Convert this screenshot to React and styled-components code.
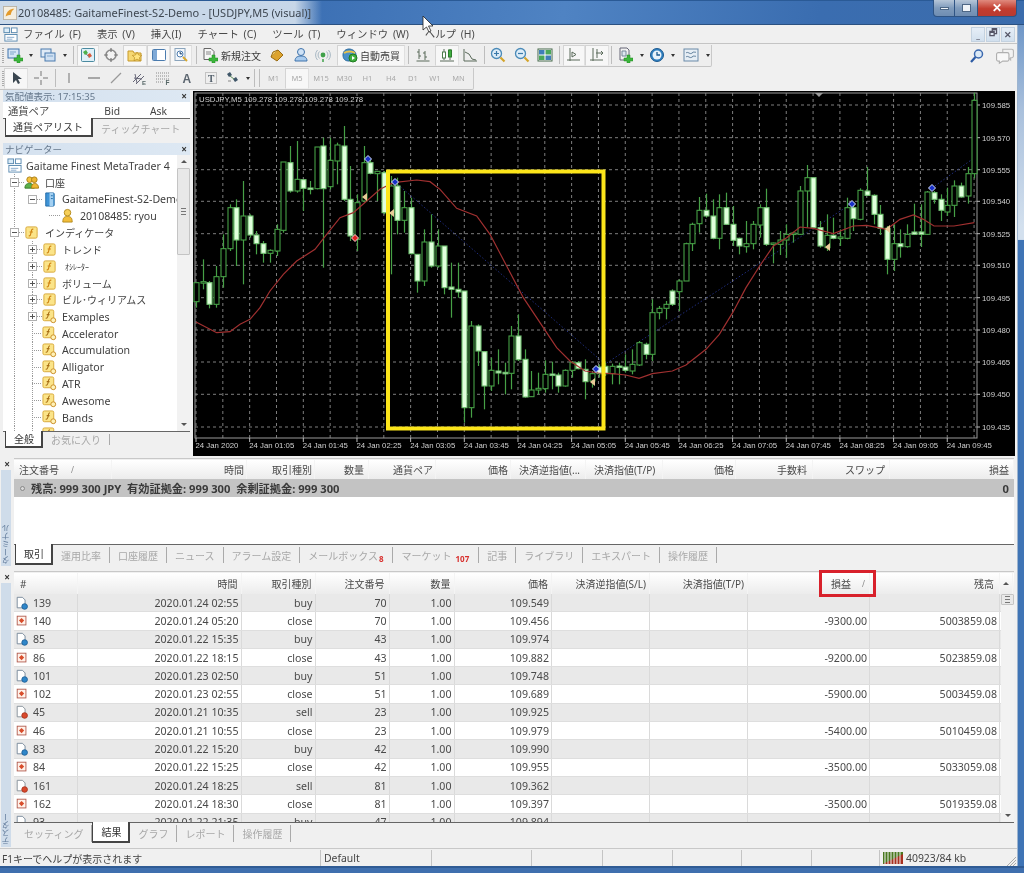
import React from 'react';
import styled, { createGlobalStyle, css } from 'styled-components';

const Global = createGlobalStyle`
  html, body { margin: 0; padding: 0; background: #f0f0f0; }
  * { box-sizing: border-box; }
`;

const FONT = `"Noto Sans", "Noto Sans CJK JP", sans-serif`;

const Root = styled.div`
  position: relative; width: 1024px; height: 873px; overflow: hidden;
  display: flex; flex-direction: column;
  font-family: ${FONT}; font-size: 10px; color: #3c3c3c; background: #f0f0f0;
  filter: blur(0.3px);
`;
const TitleBar = styled.div`
  height: 25px; flex: none; display: flex; align-items: flex-start; justify-content: space-between;
  border-top: 1px solid #2a5a96; border-bottom: 1px solid #2b5181;
  background:
    linear-gradient(90deg, rgba(214,226,238,.92) 0, rgba(214,226,238,.9) 295px, rgba(214,226,238,0) 322px),
    linear-gradient(100deg, #3c70b4 30%, #4f83c3 55%, #3a6db0 80%, #3b6cac 100%);
`;
const TitleLeft = styled.div`display: flex; align-items: center; height: 23px; padding-left: 3px; gap: 1px;`;
const TitleText = styled.span`font-size: 11px; color: #3d4650; white-space: nowrap;`;
const WinBtns = styled.div`display: flex; margin-right: 7px; margin-top: -1px;`;
const WinBtn = styled.div`
  width: ${p => p.$w}px; height: 17px; display: flex; align-items: center; justify-content: center;
  border: 1px solid #2f5484; border-top: none; border-left-width: ${p => p.$first ? 1 : 0}px;
  border-radius: ${p => p.$first ? '0 0 0 4px' : p.$close ? '0 0 4px 0' : '0'};
  background: ${p => p.$close ? 'linear-gradient(180deg,#e08a7e,#c33c2e 55%,#b93a30)' : 'linear-gradient(180deg,#b6c6d8,#7f9bbc 50%,#6f8db2)'};
  color: #fff; font-weight: 700; font-size: 12px; line-height: 1;
`;
const WinGlyph = styled.span`
  display: block; background: #eef3f8; border: 1px solid #4d6786;
  width: ${p => p.$w}px; height: ${p => p.$h}px;
`;
const Body = styled.div`flex: 1; min-height: 0; display: flex;`;
const Win = styled.div`width: 1017px; flex: none; display: flex; flex-direction: column; background: #f0f0f0;`;
const RightFrame = styled.div`
  flex: 1; background: linear-gradient(180deg, #6f97c8 0, #a9c0dc 10%, #d3e0ee 24%, #d3e0ee 25.5%, #3f74b5 25.6%, #3f74b5 100%);
  border-left: 1px solid #9db4cf;
`;
const BottomFrame = styled.div`height: 7px; flex: none; background: #3f6fae; border-top: 2px solid #2f5b94;`;

const MenuBar = styled.div`
  height: 19px; flex: none; display: flex; align-items: center; padding-left: 3px;
  border-bottom: 1px solid #c4c4c4;
`;
const MenuItems = styled.div`display: flex; gap: 16px; margin-left: 5px; margin-top: -2px; font-size: 10.4px; word-spacing: 2px; color: #4a4a4a;`;
const MdiBtns = styled.div`display: flex; gap: 1px; margin-left: auto; margin-right: 2px; align-items: center;`;
const MdiBtn = styled.div`
  width: 14px; height: 15px; display: flex; align-items: center; justify-content: center;
  background: linear-gradient(180deg, #e6eef7, #d2e0ee); border: 1px solid #c4d2e0;
  font-size: 9px; font-weight: 700; color: #556;
`;
const ToolRow = styled.div`
  height: 23px; flex: none; display: flex; align-items: center; position: relative;
`;
const ToolGroup = styled.div`
  height: 22px; display: flex; align-items: center; padding-left: 4px; flex: none;
  width: ${p => p.$w}px; background: #eeeeee;
  border-right: 1px solid #c9c9c9; border-bottom: 1px solid #c4c4c4; border-radius: 0 0 2px 0;
  background-image: repeating-linear-gradient(180deg, #aaa 0 1px, transparent 1px 2px);
  background-size: 2px 16px; background-position: 2px 3px; background-repeat: no-repeat;
`;
const Tool = styled.div`
  width: ${p => p.$w}px; height: 21px; flex: none; display: flex; align-items: center; justify-content: center;
  gap: 2px; color: #3b3b3b; font-size: 10px; white-space: nowrap;
  ${p => p.$box && css`background: #f7f7f7; border: 1px solid #d4d4d4; border-bottom-color: #eee; border-right-color: #e0e0e0;`}
`;
const Period = styled(Tool)`font-size: 7.5px; color: #a9a9a9;`;
const Sep = styled.div`
  width: ${p => p.$w}px; height: 18px; flex: none; display: flex; justify-content: center;
  &::before { content: ''; width: 1px; height: 100%; background: #bdbdbd; }
`;
const Caret = styled.div`
  width: 0; height: 0; border: 2.5px solid transparent; border-top: 3px solid #333; margin-top: 3px;
`;
const RightTools = styled.div`margin-left: auto; display: flex; gap: 11px; align-items: center; margin-right: 3px;`;

const Workspace = styled.div`height: 367px; flex: none; display: flex;`;
const LeftCol = styled.div`width: 193px; flex: none; padding: 0 3px 6px 3px; display: flex; flex-direction: column;`;
const PanelTitle = styled.div`
  height: 12px; flex: none; display: flex; align-items: center; justify-content: space-between;
  padding: 0 3px 0 2px; font-size: 9.5px; color: #66788c; white-space: nowrap;
  background: linear-gradient(90deg, #d4e1ef, #dde8f3);
`;
const CloseX = styled.span`font-size: 10px; font-weight: 700; color: #333; line-height: 1;`;
const WatchHead = styled.div`
  height: 16px; flex: none; background: #fff; display: grid; grid-template-columns: 70px 47px 47px 1fr;
  align-items: end; overflow: hidden; font-size: 10.3px; color: #444; line-height: 13px;
`;
const WatchCell = styled.span`text-align: ${p => p.$right ? 'right' : 'left'}; padding-left: ${p => p.$right ? 0 : 5}px;`;
const PanelGap = styled.div`flex: none; height: 6px;`;
const TabsRow = styled.div`
  flex: none; height: ${p => p.$h}px; display: flex; align-items: flex-start; padding-left: ${p => p.$pad}px;
  border-top: 1px solid #666; background: #f0f0f0; font-size: 10px; white-space: nowrap;
`;
const Tab = styled.div`
  height: ${p => p.$active ? p.$h + 1 : p.$h - 4}px; flex: none; display: flex; align-items: center;
  padding: 0 ${p => p.$pr ?? 8}px 0 ${p => p.$pl ?? 8}px; color: ${p => p.$active ? '#333' : '#a8a8a8'};
  ${p => p.$active
    ? css`background: #fff; margin-top: -1px; border: 1px solid #444; border-top-color: #fff; border-width: 0 2px 2px 1px;`
    : css`margin-top: 2px; ${p.$plain ? '' : 'border-right: 1px solid #aaa;'}`}
`;
const Badge = styled.b`color: #d8302e; font-size: 8px; align-self: flex-end; margin-left: ${p => p.$ml ?? 1}px; line-height: 9px;`;

const TreeWrap = styled.div`flex: 1; min-height: 0; display: flex; background: #fff;`;
const Tree = styled.div`flex: 1; min-width: 0; overflow: hidden; padding-top: 2.2px; white-space: nowrap; font-size: 10.6px;`;
const dotted = x => `repeating-linear-gradient(180deg,#9a9a9a 0 1px,transparent 1px 2px) ${x}px 0 / 1px 100% no-repeat`;
const Row = styled.div`
  height: 16.8px; display: flex; align-items: center; color: #3f3f3f;
  background: ${p => (p.$g || []).map(dotted).join(',') || 'none'};
  padding-left: ${p => p.$pad}px;
`;
const Exp = styled.span`
  width: 9px; height: 9px; flex: none; border: 1px solid #b0b0b0; background: #fff; position: relative;
  &::before { content: ''; position: absolute; left: 1px; right: 1px; top: 3px; height: 1px; background: #555; }
  ${p => p.$plus && css`&::after { content: ''; position: absolute; top: 1px; bottom: 1px; left: 3px; width: 1px; background: #555; }`}
`;
const Conn = styled.span`
  width: ${p => p.$w}px; height: 1px; flex: none;
  background: repeating-linear-gradient(90deg,#9a9a9a 0 1px,transparent 1px 2px);
`;
const RowLabel = styled.span`
  margin-left: ${p => p.$ml ?? 5}px;
  ${p => p.$cjk && css`font-size: 10px;`}
  ${p => p.$tiny && css`font-size: 8px; margin-left: 8px;`}
`;
const Scroll = styled.div`
  width: ${p => p.$w}px; flex: none; display: flex; flex-direction: column; align-items: center;
  background: #f2f2f2; color: #555; font-size: 7px;
`;
const Arrow = styled.div`
  width: 0; height: 0; flex: none; margin: 5px 0; border: 3px solid transparent;
  ${p => p.$up ? 'border-bottom: 3px solid #555; border-top: none;' : 'border-top: 3px solid #555; border-bottom: none;'}
`;
const Thumb = styled.div`
  width: 100%; height: ${p => p.$h}px; flex: none; border: 1px solid #c4c4c4; border-radius: 1px;
  background: #e8e8e8; display: flex; align-items: center; justify-content: center;
  &::before { content: ''; width: 5px; height: 5px; border-top: 1px solid #777; border-bottom: 1px solid #777; background: linear-gradient(#777,#777) 0 1.500px / 100% 1px no-repeat; }
`;
const Grow = styled.div`flex: 1;`;

const ChartBox = styled.svg`display: block; width: 822px; height: 365px; flex: none; margin-top: 1px; background: #000; font-family: "Liberation Sans", sans-serif; white-space: pre;`;

const Dock = styled.div`display: flex; flex: none; height: ${p => p.$h}px; margin-top: ${p => p.$mt}px;`;
const Side = styled.div`width: 14px; flex: none; display: flex; flex-direction: column; align-items: center; padding-top: 1px; gap: 1px;`;
const SideLabel = styled.div`
  flex: 1; width: 10px; margin-right: 2px; background: #cfdcea; color: #5c7696; font-size: 8px;
  writing-mode: vertical-rl; transform: rotate(180deg); line-height: 10px; white-space: nowrap; padding-top: 2px;
`;
const DockMain = styled.div`width: 1000px; flex: none; display: flex; flex-direction: column; border-top: 1px solid #c8c8c8; min-width: 0;`;
const Head = styled.div`
  display: grid; grid-template-columns: ${p => p.$cols}; height: ${p => p.$h}px; flex: none;
  background: linear-gradient(180deg, #fff, #ececec); margin-top: 1px; align-items: center; color: #4a4a4a; font-size: 10px; white-space: nowrap;
`;
const HCell = styled.div`
  position: relative; padding: 0 ${p => p.$pr ?? 5}px 0 ${p => p.$pl ?? 5}px;
  height: 100%; display: flex; align-items: center; justify-content: ${p => p.$right ? 'flex-end' : 'flex-start'};
  border-right: 1px solid #f4f4f4; min-width: 0;
`;
const SortMark = styled.span`color: #888; font-size: 8px; margin-left: ${p => p.$ml}px;`;
const RedBox = styled.div`position: absolute; left: 71px; top: -3px; width: 57px; height: 27px; border: 3px solid #d8212b;`;
const TotalRow = styled.div`
  height: 18px; flex: none; background: #c3c3c3; display: flex; align-items: center; justify-content: space-between;
  padding: 0 5px 0 6px; font-size: 11.2px; font-weight: 700; color: #3a3a3a; white-space: pre;
`;
const TotalLeft = styled.span`display: flex; align-items: center; gap: 6px;`;
const Dot = styled.i`width: 5px; height: 5px; border-radius: 50%; border: 1px solid #888; background: #d8d8d8; display: block;`;
const Blank = styled.div`flex: 1; background: #fff;`;

const TableArea = styled.div`display: flex; flex: none; height: 228px; overflow: hidden;`;
const RowsCol = styled.div`width: 987px; flex: none; overflow: hidden; background: #fff;`;
const DataRow = styled.div`
  display: grid; grid-template-columns: ${p => p.$cols}; height: 18.3px; align-items: center;
  background: ${p => p.$alt ? '#e9e9e9' : '#fff'}; border-bottom: 1px solid #dedede;
  font-size: 10.6px; color: #4a4a4a; white-space: nowrap;
`;
const Cell = styled.div`
  height: 100%; display: flex; align-items: center; gap: 4px;
  justify-content: ${p => p.$left ? 'flex-start' : 'flex-end'};
  padding: 0 ${p => p.$left ? 0 : 2}px 0 ${p => p.$left ? 1 : 0}px;
  border-right: 1px solid #dadada;
`;
const StatusBar = styled.div`
  height: 19px; flex: none; margin-top: 1px; border-top: 1px solid #c8c8c8; display: grid;
  grid-template-columns: 321px 111px 100px 71px 70px 69px 70px 68px 1fr; align-items: center; font-size: 10.4px; color: #444;
`;
const StatusCell = styled.div`
  height: 16px; display: flex; align-items: center; gap: 3px; padding-left: ${p => p.$pl ?? 3}px; white-space: nowrap;
  ${p => p.$sm && 'font-size: 10px;'}
  ${p => !p.$last && 'border-right: 1px solid #c4c4c4;'}
`;
const Grip = styled.svg`margin-left: auto; margin-top: 6px; flex: none;`;
const Cursor = styled.svg`position: absolute; left: 422px; top: 15px;`;
const Ico = styled.svg`display: block; flex: none;`;

const I = ({ s = 16, children, vb = '0 0 16 16' }) => <Ico width={s} height={s} viewBox={vb}>{children}</Ico>;
const Plus = () => <path d="M10 8h3v3h3v3h-3v2h-3v-2H7v-3h3z" fill="#3cb53c" stroke="#1d8a1d" strokeWidth=".5" />;
const icons = {
  add: <><rect x="1" y="2" width="11" height="9" fill="#d6e6f6" stroke="#3f73ab" /><path d="M3 5h6M3 7h4" stroke="#7fa6cc" /><Plus /></>,
  prof: <><rect x="1" y="2" width="10" height="8" fill="#dfeaf6" stroke="#4a7bae" /><rect x="5" y="6" width="10" height="8" fill="#cfe0f2" stroke="#4a7bae" /><path d="M7 9h6" stroke="#7fa6cc" /></>,
  watch: <><rect x="1.5" y="1.5" width="13" height="13" rx="1" fill="#dff0f8" stroke="#4a8aa0" /><path d="M3 5l3-2 2 3-3 2z" fill="#4ab04a" /><path d="M7 8l3-2 2 3-3 2z" fill="#d85a3a" /><path d="M6 7l3 3" stroke="#888" /></>,
  cross: <><circle cx="8" cy="8" r="5" fill="#f3f3f3" stroke="#8a8a8a" strokeWidth="1.6" /><path d="M8 1v4M8 11v4M1 8h4M11 8h4" stroke="#777" strokeWidth="1.2" /></>,
  star: <><path d="M1 4h5l1 2h7v8H1z" fill="#f6d873" stroke="#c79a2c" /><path d="M10 5l1.6 3 3.2.4-2.4 2.2.7 3.2-3.1-1.7-3 1.7.6-3.2-2.3-2.2 3.2-.4z" fill="#ffe480" stroke="#b98b1e" strokeWidth=".7" /></>,
  panel: <><rect x="1.5" y="2.5" width="13" height="11" rx="1" fill="#fff" stroke="#4a7bae" /><rect x="2" y="3" width="4" height="10" fill="#7fa9d6" /></>,
  clock: <><rect x="2" y="1.5" width="10" height="12" fill="#f2f6fa" stroke="#8aa4bc" /><circle cx="7" cy="7" r="3" fill="#fff" stroke="#4a7bae" /><path d="M7 5v2h2" stroke="#4a7bae" /><path d="M10 10l4 4" stroke="#d9a92c" strokeWidth="2" /></>,
  order: <><path d="M2 1.5h7l3 3v8H2z" fill="#f6f6f6" stroke="#666" /><path d="M4 5h5M4 7h5" stroke="#888" /><Plus /></>,
  gold: <><path d="M2 10l7-7 5 5-6 6z" fill="#dca32e" stroke="#9a6c14" /><path d="M2 10l2-5 5-2" fill="#f1cd6a" stroke="#9a6c14" /></>,
  person: <><circle cx="8" cy="5" r="3.5" fill="#cfe2f6" stroke="#3f73ab" /><path d="M2 14c0-4 3-5 6-5s6 1 6 5z" fill="#a9cbee" stroke="#3f73ab" /></>,
  signal: <><circle cx="8" cy="8" r="2.4" fill="#3fa04a" /><path d="M8 12v3" stroke="#3fa04a" strokeWidth="1.5" /><path d="M4.5 4.5a5 5 0 0 0 0 7M11.5 4.5a5 5 0 0 1 0 7M2.5 3a7.5 7.5 0 0 0 0 10M13.5 3a7.5 7.5 0 0 1 0 10" stroke="#a8b8c4" fill="none" /></>,
  auto: <><path d="M1 8c0-4 3-6 6-6s7 2 7 6-3 6-7 6-6-2-6-6z" fill="#4a90c8" stroke="#2c6a9c" /><path d="M2 6c3-2 8-2 11 0" stroke="#e8c14a" strokeWidth="2" fill="none" /><circle cx="11" cy="11" r="4" fill="#3fae3f" stroke="#1f7c1f" /><path d="M10 9l3 2-3 2z" fill="#fff" /></>,
  bars: <path d="M4 2v10M2 5h2M4 9h2M10 4v9M8 6h2M10 10h2M1.500 14h13" stroke="#5a6a5a" fill="none" />,
  candle: <><path d="M5 2v11M11 2v11" stroke="#5a6a5a" /><rect x="3.500" y="5" width="3" height="6" fill="#fff" stroke="#4a7a4a" /><rect x="9.500" y="3" width="3" height="7" fill="#3fae3f" stroke="#2c7c2c" /><path d="M1 14h14" stroke="#5a6a5a" /></>,
  line: <path d="M2 2v12h13M3 5l4 2 3 5 4 1" stroke="#5a6a5a" fill="none" />,
  zin: <><circle cx="6.500" cy="6.500" r="5" fill="#dcecf8" stroke="#4a8ab8" strokeWidth="1.300" /><path d="M4 6.500h5M6.500 4v5" stroke="#3a7aaa" strokeWidth="1.200" /><path d="M10.500 10.500l4 4" stroke="#d3a42a" strokeWidth="2.200" /></>,
  zout: <><circle cx="6.500" cy="6.500" r="5" fill="#dcecf8" stroke="#4a8ab8" strokeWidth="1.300" /><path d="M4 6.500h5" stroke="#3a7aaa" strokeWidth="1.200" /><path d="M10.500 10.500l4 4" stroke="#d3a42a" strokeWidth="2.200" /></>,
  tile: <><rect x="1" y="2" width="14" height="12" fill="#fff" stroke="#44694a" /><rect x="2" y="3" width="5.500" height="4.500" fill="#3f7fb8" /><rect x="8.500" y="3" width="5.500" height="4.500" fill="#4aa85a" /><rect x="2" y="8.500" width="5.500" height="4.500" fill="#4aa85a" /><rect x="8.500" y="8.500" width="5.500" height="4.500" fill="#3f7fb8" /></>,
  shift: <path d="M4 1v13M1 13h13M6 5l4 2.500L6 10z" stroke="#5a6a5a" fill="none" />,
  scroll: <path d="M4 1v13M1 13h13M8 2v9M7 6l7 0M12 4l2 2-2 2" stroke="#5a6a5a" fill="none" />,
  newc: <><path d="M3 1h7l2 2v10H3z" fill="#f2f2f2" stroke="#667" /><path d="M5 4h4v5H5z" fill="#dfe8f0" stroke="#789" /><Plus /></>,
  time: <><circle cx="8" cy="8" r="6.500" fill="#2f7fc0" stroke="#1c5a90" /><circle cx="8" cy="8" r="4.500" fill="#e8f2fa" /><path d="M8 5v3h3" stroke="#1c5a90" fill="none" strokeWidth="1.300" /></>,
  tmpl: <><rect x="1" y="2" width="14" height="12" fill="#e6eef5" stroke="#6a8aa8" /><path d="M3 6c2-2 4 2 6 0s3 0 4-1M3 10c2-2 4 2 6 0s3 0 4-1" stroke="#5a7a98" fill="none" /></>,
  cur: <path d="M5 2v11l3-3 2 4 2-1-2-4h4z" fill="#3a4650" />,
  xhair: <path d="M8 1v5M8 10v5M1 8h5M10 8h5" stroke="#777" />,
  vl: <path d="M8 3v10" stroke="#888" strokeWidth="1.200" />,
  hl: <path d="M2 8h12" stroke="#777" strokeWidth="1.200" />,
  tl: <path d="M3 13l10-10" stroke="#999" strokeWidth="1.200" />,
  chan: <><path d="M2 12l8-8M5 14l8-8M3 8l8 1M4 4l2 9" stroke="#667" fill="none" /><text x="11" y="15" fontSize="6" fontFamily="Liberation Sans" fontWeight="700" fill="#566">E</text></>,
  fib: <><path d="M1 3h13M1 6h13M1 9h13M1 12h8" stroke="#8a8a8a" strokeDasharray="1 1" /><text x="10.500" y="15" fontSize="6.500" fontFamily="Liberation Sans" fontWeight="700" fill="#566">F</text></>,
  textA: <text x="3.500" y="13" fontSize="12" fontFamily="Liberation Sans" fontWeight="700" fill="#5c6670">A</text>,
  textT: <><rect x="2.500" y="2.500" width="11" height="11" fill="none" stroke="#999" strokeDasharray="1 1" /><text x="5" y="12" fontSize="9.500" fontFamily="Liberation Serif" fontWeight="700" fill="#4f5c68">T</text></>,
  arrows: <><path d="M2 4l3-2 2 3-3 2z" fill="#3f5668" /><path d="M8 9l3-2 2 3-3 2z" fill="#3f5668" /><path d="M5 6l4 3" stroke="#5a8a5a" /><path d="M3 11h3" stroke="#888" /></>,
  search: <><circle cx="9.500" cy="6" r="4" fill="#dbe9f6" stroke="#3a68ae" strokeWidth="1.500" /><path d="M6.500 9l-4.500 5" stroke="#2c5aa4" strokeWidth="2.200" /></>,
  chat: <><path d="M6 2h8a1.500 1.500 0 0 1 1.500 1.500V8a1.500 1.500 0 0 1-1.500 1.500h-1v2l-2-2H6z" fill="#f2f2f2" stroke="#b8b8b8" /><path d="M2 5h8a1.500 1.500 0 0 1 1.500 1.500V11a1.500 1.500 0 0 1-1.500 1.500H6l-3 2v-2H2A1.500 1.500 0 0 1 .5 11V6.500A1.500 1.500 0 0 1 2 5z" fill="#f8f8f8" stroke="#b0b0b0" /></>,
  app: <><rect x="1" y="1" width="6" height="5" fill="#dcecf8" stroke="#5a8ab0" /><rect x="9" y="1" width="6" height="5" fill="#fff" stroke="#5a8ab0" /><rect x="2" y="8" width="13" height="7" fill="#fff" stroke="#5a8ab0" /><path d="M4 11h8M4 13h6" stroke="#88aacc" /></>,
  logo: <><rect x=".5" y=".5" width="15" height="15" fill="#f4eee0" stroke="#b8b0a0" /><path d="M3 12C4 6 8 3 13 3c-3 2-4 5-4 7-2 0-4 1-6 2z" fill="#e39a2a" /></>,
  people: <><circle cx="6" cy="5" r="3" fill="#f4c43e" stroke="#a97e12" /><circle cx="11" cy="5" r="3" fill="#efb530" stroke="#a97e12" /><path d="M1 14c0-4 2-5 5-5s5 2 5 5z" fill="#5cb04a" stroke="#3a7c2c" /><path d="M8 14c0-4 2-5 3.500-5s4 1 4 5z" fill="#f0b832" stroke="#a97e12" /></>,
  server: <><path d="M4 1h8a1 1 0 0 1 1 1v12a1 1 0 0 1-1 1H4z" fill="#3f93d6" stroke="#206aa6" /><path d="M8 1h4v14H8z" fill="#a3d0f2" /><path d="M9.500 4h2M9.500 7h2" stroke="#206aa6" /></>,
  user: <><circle cx="8" cy="5" r="3.500" fill="#f6cf58" stroke="#b38a1c" /><path d="M3 15c0-5 2-6 5-6s5 1 5 6z" fill="#f2bd3a" stroke="#b38a1c" /></>,
  fn: <><rect x="2" y="2" width="12" height="12" rx="1.500" fill="#fbe489" stroke="#d7a838" /><path d="M10 4.500C8 4 8 6 7.500 8S7 12 5 11.500M6 7.500h3.500" stroke="#d08412" strokeWidth="1.200" fill="none" /></>,
  fnc: <><rect x="1" y="1" width="11.500" height="11.500" rx="1.500" fill="#fbe489" stroke="#d7a838" /><path d="M8.500 3C6.500 3 7 5 6.500 7S6 10 4 10M5 6h3" stroke="#a86e14" strokeWidth="1.100" fill="none" /><circle cx="12" cy="12" r="2.600" fill="#fff2b8" stroke="#c98c22" /></>,
  buy: <><path d="M2.500 1.500h6l3 3v9h-9z" fill="#fff" stroke="#6f8194" /><circle cx="11" cy="12" r="3.200" fill="#2f86c9" stroke="#1f5f96" /></>,
  sell: <><path d="M2.500 1.500h6l3 3v9h-9z" fill="#fff" stroke="#7f8a94" /><circle cx="11" cy="12" r="3.200" fill="#d8492c" stroke="#a8321c" /></>,
  close: <><rect x="2.500" y="2.500" width="10" height="10" fill="#fff2ea" stroke="#b0584a" /><path d="M7.500 4.500l3 3-3 3-3-3z" fill="#d84d2c" /></>,
};
const Icon = ({ k, s }) => <I s={s}>{icons[k]}</I>;

const R1 = [
  ['add', 22], ['^', 10], ['prof', 24], ['^', 9], ['|', 8], ['watch', 22, 1], ['cross', 24], ['star', 24, 1], ['panel', 23, 1], ['clock', 22, 1], ['|', 8],
  ['order', 20], ['t:新規注文', 42], ['gold', 30], ['person', 17], ['signal', 28], ['auto:自動売買', 68, 1], ['|', 6], ['bars', 24], ['candle', 24, 1], ['line', 22], ['|', 6],
  ['zin', 21], ['zout', 27], ['tile', 20], ['|', 8], ['shift', 22, 1], ['scroll', 24, 1], ['|', 4], ['newc', 24], ['^', 9], ['time', 22], ['^', 10], ['tmpl', 26], ['^', 8],
];
const R2 = [
  ['cur', 24, 1], ['xhair', 26], ['|', 2], ['vl', 26], ['hl', 23], ['tl', 22], ['chan', 23], ['fib', 25], ['textA', 24], ['textT', 24], ['arrows', 20], ['^', 9], ['|', 5], ['|', 5],
  ['p:M1', 23], ['p:M5', 24, 1], ['p:M15', 24], ['p:M30', 23], ['p:H1', 23], ['p:H4', 24], ['p:D1', 20], ['p:W1', 24], ['p:MN', 23],
];
const renderTool = ([k, w, box], i) => {
  if (k === '^') return <Tool key={i} $w={w}><Caret /></Tool>;
  if (k === '|') return <Sep key={i} $w={w} />;
  if (k.startsWith('t:')) return <Tool key={i} $w={w}>{k.slice(2)}</Tool>;
  if (k.startsWith('p:')) return <Period key={i} $w={w} $box={box}>{k.slice(2)}</Period>;
  if (k.startsWith('auto:')) return <Tool key={i} $w={w} $box={box}><Icon k="auto" />{k.slice(5)}</Tool>;
  return <Tool key={i} $w={w} $box={box}><Icon k={k} /></Tool>;
};

const TREE = [
  { pad: 4, ic: 'app', t: 'Gaitame Finest MetaTrader 4', ml: 4 },
  { pad: 6.5, exp: 'm', ic: 'people', t: '口座', c: 5.5, ml: 6, g: [11] },
  { pad: 24.5, exp: 'm', ic: 'server', t: 'GaitameFinest-S2-Demo', c: 5.5, g: [11] },
  { pad: 46, ic: 'user', t: '20108485: ryou', c: 11, g: [11] },
  { pad: 6.5, exp: 'm', ic: 'fn', t: 'インディケータ', c: 5.5, ml: 6, g: [11] },
  ...['トレンド', 'ｵｼﾚｰﾀｰ', 'ボリューム', 'ビル･ウィリアムス'].map(t => ({ pad: 24.5, exp: 'p', ic: 'fn', t, c: 5.5, g: [11, 29], tiny: t === 'ｵｼﾚｰﾀｰ' })),
  { pad: 24.5, exp: 'p', ic: 'fnc', t: 'Examples', c: 5.5, g: [11, 29] },
  ...['Accelerator', 'Accumulation', 'Alligator', 'ATR', 'Awesome', 'Bands', ''].map(t => ({ pad: 29, ic: 'fnc', t, c: 10, g: [11, 29] })),
];

// top wick, bottom wick, body top, body bottom, filled — in chart crop units (1/3 px)
const C = [
  [575,650,575,632,0],[505,595,572,575,0],[570,652,575,640,1],[525,650,557,640,0],[430,590,473,557,0],[340,480,350,473,0],[325,525,350,447,1],[270,580,375,447,0],[370,440,375,432,1],[420,490,432,458,1],
  [450,515,458,487,1],[475,515,478,487,0],[400,495,415,480,0],[213,425,213,418,0],[165,305,215,300,1],[150,305,265,300,0],[265,360,266,292,1],[270,310,291,294,1],[168,295,168,293,0],[140,530,165,293,1],
  [140,295,208,287,0],[155,280,162,210,0],[105,330,165,325,1],[225,450,325,435,1],[310,480,335,445,0],[165,335,215,330,0],[205,250,215,247,1],[240,330,241,248,0],[240,370,245,365,1],[255,550,285,365,0],
  [260,430,285,388,1],[300,425,350,388,0],[320,490,350,488,1],[490,605,490,570,1],[415,585,453,570,0],[370,530,453,525,1],[415,530,465,525,0],[465,610,465,590,1],[515,680,588,595,1],[515,620,595,603,1],
  [600,995,600,950,1],[690,980,705,950,0],[700,825,705,780,1],[780,955,782,885,1],[800,900,838,885,0],[775,880,840,846,1],[815,910,844,847,1],[705,895,735,847,0],[670,810,735,806,1],[775,920,805,918,1],
  [840,918,897,917,0],[845,910,892,897,0],[808,905,850,893,0],[812,895,849,852,1],[845,905,852,885,1],[835,887,838,885,0],[810,860,815,838,0],[810,835,815,833,1],[805,925,835,872,1],[840,890,848,870,0],
  [820,860,828,848,1],[815,855,826,848,1],[818,880,826,848,0],[815,880,825,828,1],[790,845,828,838,1],[775,850,820,840,0],[750,825,755,822,0],[755,805,760,790,1],[625,810,665,790,0],[645,685,652,665,0],
  [630,685,640,652,0],[595,645,600,640,1],[565,660,570,602,0],[455,570,458,570,0],[395,480,400,458,0],[318,425,358,398,0],[308,380,358,375,1],[325,445,375,442,1],[310,475,350,442,0],[305,402,350,400,1],
  [345,465,400,448,1],[440,490,442,465,1],[390,485,458,467,0],[390,475,400,458,0],[340,440,350,402,0],[293,465,350,460,1],[455,517,456,460,0],[420,492,447,460,0],[400,500,430,447,0],[422,455,426,430,0],
  [285,432,300,430,0],[222,410,260,300,0],[260,415,260,410,1],[390,470,410,465,1],[370,480,433,470,0],[380,445,433,442,1],[415,465,438,442,0],[320,445,350,442,0],[340,420,350,383,1],[292,388,298,385,0],
  [228,315,300,313,1],[310,400,313,370,1],[342,432,370,412,1],[405,550,412,505,1],[400,540,458,505,0],[415,500,458,467,1],[400,470,430,467,0],[338,432,423,430,1],[340,468,423,430,1],[300,432,303,430,0],
  [300,338,305,325,1],[310,390,325,358,1],[290,375,343,363,0],[268,378,285,343,0],[275,320,285,318,1],[228,338,248,315,0],[5,262,28,248,0],
];
const yy = z => 90 + z / 3;
const MA = [[18,693],[60,715],[80,725],[120,722],[150,700],[180,685],[210,650],[240,600],[280,550],[320,510],[375,475],[410,430],[450,380],[490,365],[530,330],[570,295],[610,275],[680,267],[720,272],[750,295],[800,352],[860,375],[900,430],[950,525],[1000,620],[1060,710],[1100,770],[1140,810],[1185,840],[1225,846]]
  .map(([x, y]) => `${190 + x / 3},${yy(y)}`)
  .concat([[37,848],[77,852],[117,862],[157,848],[217,840],[258,822],[318,775],[358,730],[398,665],[438,590],[479,525],[520,465],[560,440],[600,408],[640,412],[700,428],[760,405],[800,403],[860,415],[900,385],[940,372],[970,385],[1002,405],[1062,405],[1123,395]].map(([x, y]) => `${600 + x / 3},${yy(y)}`))
  .join(' ');
const gridY = [104, 136.7, 168.7, 200.3, 232.7, 264.3, 296.7, 329, 361, 393.3, 426];
const priceL = ['109.585','109.570','109.555','109.540','109.525','109.510','109.495','109.480','109.465','109.450','109.435'];
const timeL = ['2020','01:05','01:45','02:25','03:05','03:45','04:25','05:05','05:45','06:25','07:05','07:45','08:25','09:05','09:45'];
const BLUE = [[368,158],[395,181],[605,363],[851,203],[932,187],[974,157]];
const DIA = [[368,158],[395,181],[596,368],[852,203],[932,187]];
const TAN = [[365,196],[392,212],[593,381],[828,246],[888,228]];

const Chart = () => (
  <ChartBox viewBox="193 90 822 365">
    <rect x="195" y="92" width="782" height="345" fill="none" stroke="#9a9a9a" />
    {gridY.map(y => <path key={y} d={`M195 ${y}H977`} stroke="#8c8c8c" strokeDasharray="3 3" strokeWidth=".9" />)}
    {Array.from({ length: 30 }, (_, i) => 196 + i * 26.83).map(x => <path key={x} d={`M${x} 92V437`} stroke="#8c8c8c" strokeDasharray="3 3" strokeWidth=".9" />)}
    {gridY.map(y => <path key={y} d={`M977 ${y}h3`} stroke="#bbb" />)}
    {timeL.map((_, i) => <path key={i} d={`M${196 + i * 53.66} 437v4`} stroke="#bbb" />)}
    <path d="M815 92h8l-4 4z" fill="#999" />
    <path d={'M' + BLUE.slice(1, 4).map(p => p.join(' ')).join('L')} stroke="#1f2c7a" strokeDasharray="1.500 2" fill="none" />
    <path d="M932 187L974 157" stroke="#1f2c7a" strokeDasharray="1.500 2" fill="none" />
    {C.map(([t, b, bt, bb, f], i) => {
      const x = Math.round(196 + i * 6.709) + .5;
      return (
        <g key={i}>
          <path d={`M${x} ${yy(t)}V${yy(b)}`} stroke="#46a046" strokeWidth="1.200" />
          <rect x={x - 2.5} y={yy(bt)} width="5" height={Math.max(1.500, (bb - bt) / 3)} fill={f ? '#e0ffdc' : '#000'} stroke={f ? '#70c070' : '#46a046'} strokeWidth="1.100" />
        </g>
      );
    })}
    <polyline points={MA} fill="none" stroke="#a03030" strokeWidth="1.200" />
    <rect x="388" y="170.500" width="215.500" height="257" fill="none" stroke="#fce51a" strokeWidth="4" />
    {DIA.map(([x, y], i) => <path key={i} d={`M${x} ${y - 3.500}l3.500 3.500-3.500 3.500-3.500-3.500z`} fill="#1830c8" stroke="#d8e4ff" />)}
    <path d="M355 233.500l3.500 3.500-3.500 3.500-3.500-3.500z" fill="#e02020" stroke="#ffd8d8" />
    {TAN.map(([x, y], i) => <path key={i} d={`M${x - 3} ${y}l5-4v8z`} fill="#e9cb98" />)}
    <g fontSize="7.800" fill="#d0d0d0">
      <text x="199" y="101">USDJPY,M5  109.278 109.278 109.278 109.278</text>
      {priceL.map((t, i) => <text key={t} x="982" y={gridY[i] + 3}>{t}</text>)}
      {timeL.map((t, i) => <text key={t} x={195.500 + i * 53.66} y="447">24 Jan {t}</text>)}
    </g>
  </ChartBox>
);

const TERM = '98px 135px 68px 54px 67px 75px 75px 77px 73px 77px 77px 1fr';
const TEST = '64px 163.500px 74px 74px 65px 97.500px 98px 98px 122px 130px';
const ROWS = [
  ['buy','139','2020.01.24 02:55','buy','70','109.549'],
  ['close','140','2020.01.24 05:20','close','70','109.456','-9300.00','5003859.08'],
  ['buy','85','2020.01.22 15:35','buy','43','109.974'],
  ['close','86','2020.01.22 18:15','close','43','109.882','-9200.00','5023859.08'],
  ['buy','101','2020.01.23 02:50','buy','51','109.748'],
  ['close','102','2020.01.23 02:55','close','51','109.689','-5900.00','5003459.08'],
  ['sell','45','2020.01.21 10:35','sell','23','109.925'],
  ['close','46','2020.01.21 10:55','close','23','109.979','-5400.00','5010459.08'],
  ['buy','83','2020.01.22 15:20','buy','42','109.990'],
  ['close','84','2020.01.22 15:25','close','42','109.955','-3500.00','5033059.08'],
  ['sell','161','2020.01.24 18:25','sell','81','109.362'],
  ['close','162','2020.01.24 18:30','close','81','109.397','-3500.00','5019359.08'],
  ['buy','93','2020.01.22 21:35','buy','47','109.894'],
];

export default function App() {
  return (
    <Root>
      <Global />
      <TitleBar>
        <TitleLeft><Icon k="logo" s={14} /><TitleText>20108485: GaitameFinest-S2-Demo - [USDJPY,M5 (visual)]</TitleText></TitleLeft>
        <WinBtns>
          <WinBtn $w={22} $first><WinGlyph $w={9} $h={3} /></WinBtn>
          <WinBtn $w={23}><WinGlyph $w={9} $h={8} /></WinBtn>
          <WinBtn $w={39} $close>✕</WinBtn>
        </WinBtns>
      </TitleBar>
      <Body>
        <Win>
          <MenuBar>
            <Icon k="app" s={15} />
            <MenuItems>
              <span>ファイル (F)</span><span>表示 (V)</span><span>挿入(I)</span><span>チャート (C)</span><span>ツール (T)</span><span>ウィンドウ (W)</span><span>ヘルプ (H)</span>
            </MenuItems>
            <MdiBtns><MdiBtn>_</MdiBtn><MdiBtn>🗗︎</MdiBtn><MdiBtn>✕</MdiBtn></MdiBtns>
          </MenuBar>
          <ToolRow>
            <ToolGroup $w={712}>{R1.map(renderTool)}</ToolGroup>
            <RightTools><Icon k="search" /><Icon k="chat" s={18} /></RightTools>
          </ToolRow>
          <ToolRow>
            <ToolGroup $w={474}>{R2.map(renderTool)}</ToolGroup>
          </ToolRow>
          <Workspace>
            <LeftCol>
              <PanelTitle>気配値表示: 17:15:35<CloseX>×</CloseX></PanelTitle>
              <WatchHead><WatchCell>通貨ペア</WatchCell><WatchCell $right>Bid</WatchCell><WatchCell $right>Ask</WatchCell></WatchHead>
              <TabsRow $h={19} $pad={2}>
                <Tab $active $h={18} $pl={7} $pr={8}>通貨ペアリスト</Tab>
                <Tab $h={18} $plain $pl={8}>ティックチャート</Tab>
              </TabsRow>
              <PanelGap />
              <PanelTitle>ナビゲーター<CloseX>×</CloseX></PanelTitle>
              <TreeWrap>
                <Tree>
                  {TREE.map((n, i) => (
                    <Row key={i} $pad={n.pad} $g={n.g}>
                      {n.exp && <Exp $plus={n.exp === 'p'} />}
                      {n.c && <Conn $w={n.c} />}
                      <Icon k={n.ic} s={15} />
                      {n.t && <RowLabel $ml={n.ml} $tiny={n.tiny} $cjk={/[^\x00-\x7f]/.test(n.t)}>{n.t}</RowLabel>}
                    </Row>
                  ))}
                </Tree>
                <Scroll $w={13}>
                  <Arrow $up /><Thumb $h={87} /><Grow /><Arrow />
                </Scroll>
              </TreeWrap>
              <TabsRow $h={20} $pad={2}>
                <Tab $active $h={16} $pl={8} $pr={7}>全般</Tab>
                <Tab $h={15} $pl={8} $pr={8}>お気に入り</Tab>
              </TabsRow>
            </LeftCol>
            <Chart />
          </Workspace>

          <Dock $h={108} $mt={1}>
            <Side><CloseX>×</CloseX><SideLabel>ターミナル</SideLabel></Side>
            <DockMain>
              <Head $cols={TERM} $h={19}>
                <HCell>注文番号<SortMark $ml={12}>/</SortMark></HCell>
                <HCell $right $pr={2}>時間</HCell><HCell $right $pr={2}>取引種別</HCell><HCell $right $pr={4}>数量</HCell>
                <HCell $pl={24} $pr={0}>通貨ペア</HCell><HCell $right $pr={2}>価格</HCell>
                <HCell $pl={8} $pr={0}>決済逆指値(...</HCell><HCell $pl={8} $pr={0}>決済指値(T/P)</HCell>
                <HCell $right $pr={1}>価格</HCell><HCell $right>手数料</HCell><HCell $right $pr={4}>スワップ</HCell><HCell $right $pr={4}>損益</HCell>
              </Head>
              <TotalRow>
                <TotalLeft><Dot />残高: 999 300 JPY  有効証拠金: 999 300  余剰証拠金: 999 300</TotalLeft><span>0</span>
              </TotalRow>
              <Blank />
              <TabsRow $h={22} $pad={1}>
                <Tab $active $h={20} $pl={8} $pr={7}>取引</Tab>
                {['運用比率', '口座履歴', 'ニュース', 'アラーム設定'].map(t => <Tab key={t} $h={20}>{t}</Tab>)}
                <Tab $h={20} $pr={9}>メールボックス<Badge>8</Badge></Tab>
                <Tab $h={20} $pr={9}>マーケット<Badge $ml={4}>107</Badge></Tab>
                {['記事', 'ライブラリ', 'エキスパート', '操作履歴'].map(t => <Tab key={t} $h={20}>{t}</Tab>)}
              </TabsRow>
            </DockMain>
          </Dock>

          <Dock $h={276} $mt={5}>
            <Side><CloseX>×</CloseX><SideLabel>テスター</SideLabel></Side>
            <DockMain>
              <Head $cols={`${TEST} 13px`} $h={21}>
                <HCell $pl={6}>#</HCell>
                <HCell $right $pr={3}>時間</HCell><HCell $right $pr={3}>取引種別</HCell><HCell $right $pr={4}>注文番号</HCell><HCell $right $pr={3}>数量</HCell>
                <HCell $right $pr={3}>価格</HCell><HCell $right $pr={3}>決済逆指値(S/L)</HCell><HCell $right $pr={3}>決済指値(T/P)</HCell>
                <HCell $pl={83} $pr={0}>損益<SortMark $ml={11}>/</SortMark><RedBox /></HCell>
                <HCell $right $pr={5}>残高</HCell>
                <HCell $right $pl={3} $pr={3}><Arrow $up /></HCell>
              </Head>
              <TableArea>
                <RowsCol>
                  {ROWS.map(r => (
                    <DataRow key={r[1]} $cols={TEST} $alt={r[0] !== 'close'}>
                      <Cell $left><Icon k={r[0]} s={14} />{r[1]}</Cell>
                      <Cell>{r[2]}</Cell><Cell>{r[3]}</Cell><Cell>{r[4]}</Cell><Cell>1.00</Cell><Cell>{r[5]}</Cell>
                      <Cell /><Cell /><Cell>{r[6]}</Cell><Cell>{r[7]}</Cell>
                    </DataRow>
                  ))}
                </RowsCol>
                <Scroll $w={13}><Thumb $h={11} /><Grow /><Arrow /></Scroll>
              </TableArea>
              <TabsRow $h={24} $pad={1}>
                <Tab $h={21} $pl={9} $pr={8}>セッティング</Tab>
                <Tab $active $h={20} $pl={8} $pr={7}>結果</Tab>
                {['グラフ', 'レポート', '操作履歴'].map(t => <Tab key={t} $h={21}>{t}</Tab>)}
              </TabsRow>
            </DockMain>
          </Dock>

          <StatusBar>
            <StatusCell $pl={2} $sm>F1キーでヘルプが表示されます</StatusCell>
            <StatusCell>Default</StatusCell>
            <StatusCell /><StatusCell /><StatusCell /><StatusCell /><StatusCell /><StatusCell />
            <StatusCell $last>
              <svg width="20" height="12" viewBox="0 0 20 12" role="img"><path d="M0 0h20v12H0z" fill="#4a7a20" /><path d="M0 12L20 2v10z" fill="#a83020" /><path d="M2 0v12M5 0v12M8 0v12M11 0v12M14 0v12M17 0v12" stroke="#f0f0f0" /></svg>
              40923/84 kb
              <Grip width="12" height="12" viewBox="0 0 12 12"><path d="M11 2L2 11M11 5l-6 6M11 8l-3 3" stroke="#aaa" /></Grip>
            </StatusCell>
          </StatusBar>
        </Win>
        <RightFrame />
      </Body>
      <BottomFrame />
      <Cursor width="12" height="18" viewBox="0 0 12 18"><path d="M1 1v14l3.500-3 2.500 5 2-1-2.500-5H11z" fill="#fff" stroke="#222" strokeWidth=".8" /></Cursor>
    </Root>
  );
}
